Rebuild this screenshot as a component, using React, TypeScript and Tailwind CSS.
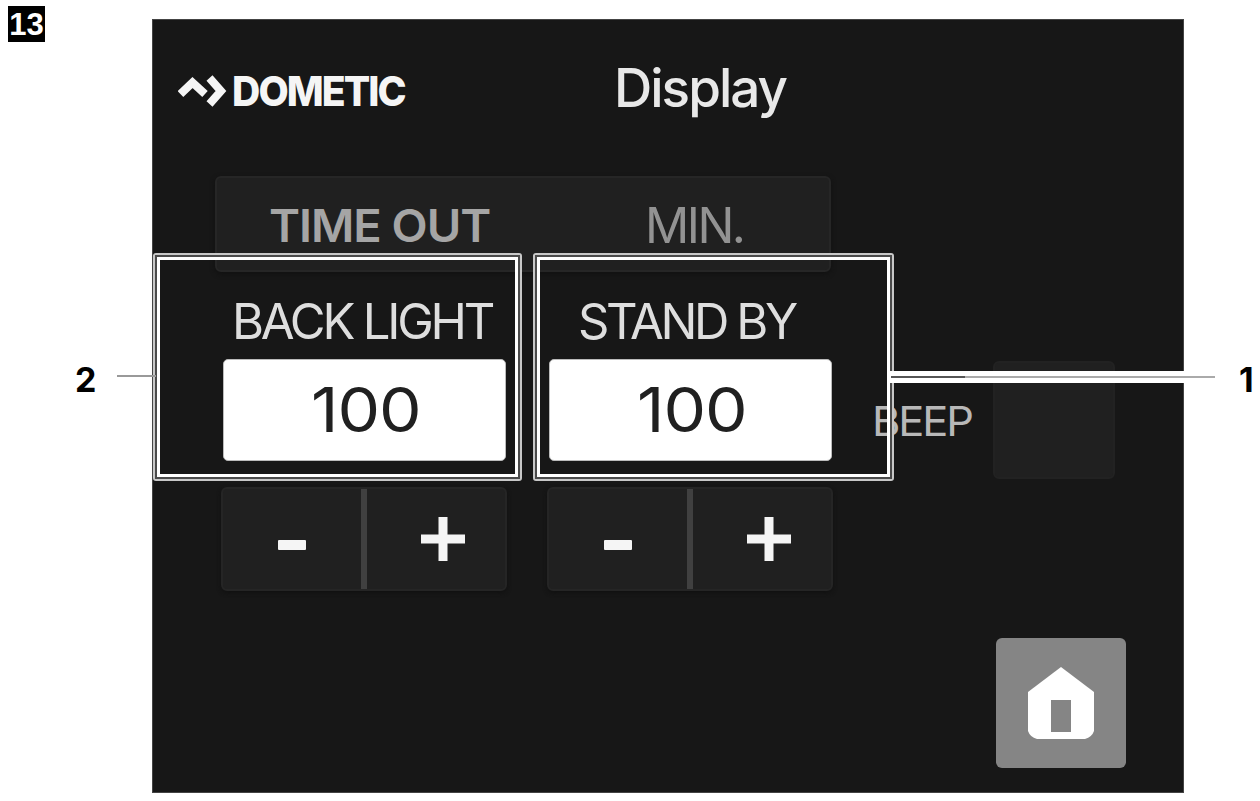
import React from 'react';

interface TimerProps {
  label: string;
  value: number;
  labelClass: string;
}

const Timer: React.FC<TimerProps> = ({ label, value, labelClass }) => (
  <div className="w-[286px] flex flex-col items-center">
    <div className={`h-[87px] w-full text-[49px] leading-[99px] text-[#dedede] whitespace-nowrap ${labelClass}`}>
      {label}
    </div>
    <div className="w-[283px] h-[102px] rounded-[5px] bg-white border border-[#bbb] text-[#202020] text-[62px] leading-[100px] pl-[87px]">
      <span className="inline-block origin-left scale-x-[1.09] tracking-[-1px]">{value}</span>
    </div>
    <div className="mt-[26px] w-full h-[104px] flex rounded-[6px] border-2 border-[#252525] bg-[#202020] shadow-[0_2px_4px_#111]">
      <button className="w-[138px] flex items-center justify-center pt-[11px]">
        <svg className="w-7 h-[10px]" viewBox="0 0 28 10" fill="#f5f5f5">
          <rect width="28" height="10" rx="1" />
        </svg>
      </button>
      <div className="w-[6px] bg-[#404040]" />
      <button className="flex-1 flex items-center justify-center pl-[14px]">
        <svg className="w-11 h-11" viewBox="0 0 44 44" fill="#f5f5f5">
          <path d="M17.5 0h9v17.5H44v9H26.5V44h-9V26.5H0v-9h17.5z" />
        </svg>
      </button>
    </div>
  </div>
);

// Outlined frame drawn over the controls that a callout number refers to
const Frame: React.FC<{ className: string }> = ({ className }) => (
  <div className={`absolute rounded-[3px] border-2 border-[#c8c8c8] bg-transparent ${className}`}>
    <div className="w-full h-full border-2 border-[#4a4a4a]">
      <div className="w-full h-full border-[3px] border-white" />
    </div>
  </div>
);

export default function App() {
  return (
    <div className="relative w-[1260px] h-[801px] overflow-hidden bg-white flex font-['Inter',sans-serif] antialiased">
      {/* Left margin */}
      <aside className="w-[152px] pl-2 pt-[6px]">
        <div className="w-[37px] h-[36px] bg-black text-white text-center font-bold text-[31px] leading-[38px] font-['Liberation_Sans',sans-serif]">
          13
        </div>
        <div className="mt-[314px] pl-[67px] text-[34px] leading-[48px] font-bold text-black">2</div>
      </aside>

      {/* Screen */}
      <main className="mt-[19px] w-[1032px] h-[774px] bg-[#171717] border border-[#444]">
        <header className="h-[156px] flex">
          <div className="pl-[25px] w-[461px] flex">
            <svg className="mt-[54px] w-[50px] h-[34px]" viewBox="0 0 50 34" fill="none" stroke="#f5f5f5" strokeWidth="8">
              <path d="M2.500 20L14.500 8.500L27 20M31.500 4L43 17L31.500 30" />
            </svg>
            <span className="ml-[4px] text-[41px] leading-[142px] font-extrabold text-[#f5f5f5]">
              <span className="inline-block origin-left scale-x-[0.955] tracking-[-2px]">DOMETIC</span>
            </span>
          </div>
          <h1 className="text-[53px] leading-[137px] font-medium text-[#e8e8e8] tracking-[-2px]">Display</h1>
        </header>

        <div className="ml-[62px] w-[616px] h-[96px] flex rounded-[6px] border-2 border-[#262626] bg-[#202020] shadow-[0_2px_5px_#111]">
          <div className="pl-[52px] w-[428px] text-[45px] leading-[96px] font-semibold text-[#a5a5a5] whitespace-nowrap">
            <span className="inline-block origin-left scale-x-[1.045] tracking-[-1px]">TIME OUT</span>
          </div>
          <div className="text-[49px] leading-[95px] text-[#929292] tracking-[-2.500px]">MIN.</div>
        </div>

        <div className="pl-[68px] flex">
          <Timer label="BACK LIGHT" value={100} labelClass="pl-[11px] tracking-[-3.200px]" />
          <div className="ml-[40px]">
            <Timer label="STAND BY" value={100} labelClass="pl-[31px] tracking-[-3.400px]" />
          </div>
          <div className="mt-[126px] ml-[39px] w-[121px] text-[41px] leading-[46px] text-[#b8b8b8]">
            <span className="inline-block origin-left scale-x-[1.06] tracking-[-2px]">BEEP</span>
          </div>
          <div className="mt-[89px] w-[122px] h-[118px] rounded-[6px] border-2 border-[#222] bg-[#202020]" />
        </div>

        <button className="ml-[843px] mt-[47px] w-[130px] h-[130px] rounded-[6px] bg-[#858585] flex justify-center">
          <svg className="mt-[29px] w-[66px] h-[72px]" viewBox="0 0 66 72">
            <path d="M33 0L66 25V64Q64 70 57 72H9Q2 70 0 64V25Z" fill="#fff" />
            <rect x="23" y="33" width="20" height="32" fill="#858585" />
          </svg>
        </button>
      </main>

      {/* Right margin */}
      <aside className="pt-[356px] pl-[55px] text-[34px] leading-[48px] font-bold text-black">1</aside>

      {/* Callout frames and leader lines */}
      <Frame className="left-[153px] top-[253px] w-[369px] h-[228px]" />
      <Frame className="left-[533px] top-[253px] w-[361px] h-[228px]" />
      <div className="absolute left-[117px] top-[375px] w-[39px] h-[2px] bg-[#999]" />
      <div className="absolute left-[890px] top-[371px] w-[296px] h-[12px] bg-white" />
      <div className="absolute left-[891px] top-[376px] w-[324px] h-[2px] bg-[#aaa]">
        <div className="w-[74px] h-full bg-[#555]" />
      </div>
    </div>
  );
}
